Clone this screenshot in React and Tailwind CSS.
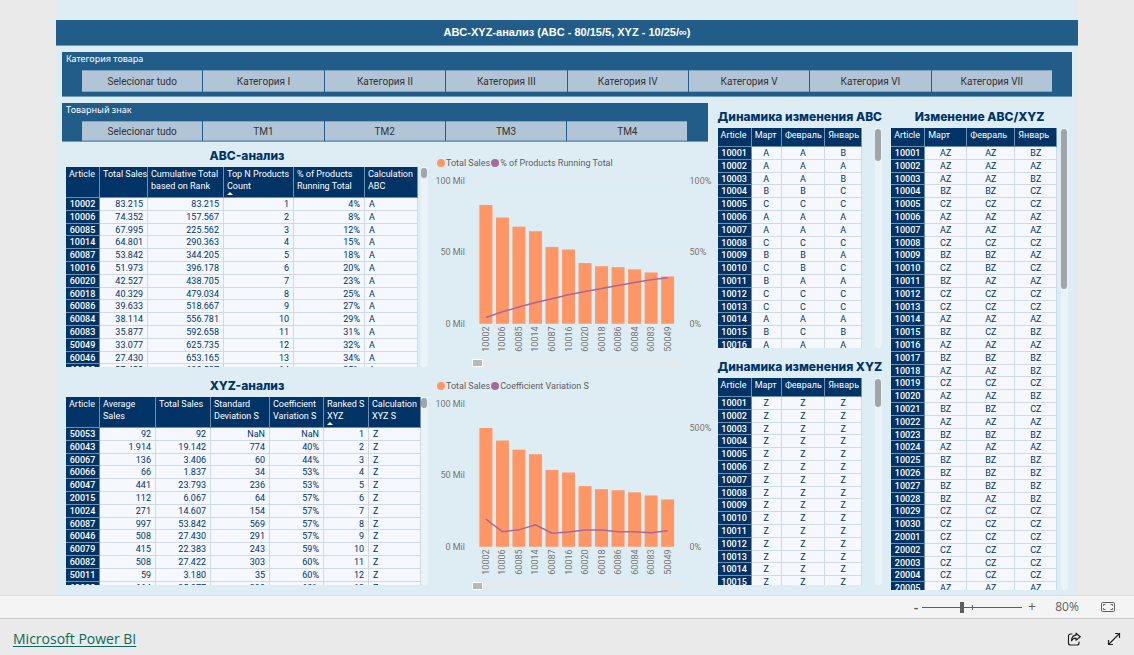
/**
 * App.jsx — ABC-XYZ analysis report
 *
 * Report canvas (slicers, two ranked tables with combo charts, three monthly
 * matrices) above the zoom bar and the embed footer.
 */

import { useState } from 'react';

// ─── Data ─────────────────────────────────────────────────────────────────────
const CATEGORIES = [
  'Selecionar tudo', 'Категория I', 'Категория II', 'Категория III',
  'Категория IV', 'Категория V', 'Категория VI', 'Категория VII',
];
const BRANDS = ['Selecionar tudo', 'ТМ1', 'ТМ2', 'ТМ3', 'ТМ4'];

const ABC_COLS = [
  { label: 'Article', width: 'w-[34px]' },
  { label: 'Total\u00a0Sales', width: 'w-[48px]', align: 'text-right' },
  { label: 'Cumulative Total based on Rank', width: 'w-[76px]', align: 'text-right' },
  { label: 'Top N Products Count', width: 'w-[70px]', align: 'text-right', sorted: true },
  { label: '% of Products Running Total', width: 'w-[71px]', align: 'text-right' },
  { label: 'Calculation ABC', width: 'w-[53px]', align: 'text-left' },
];
const ABC_ROWS = [
  ['10002', '83.215', '83.215', '1', '4%', 'A'],
  ['10006', '74.352', '157.567', '2', '8%', 'A'],
  ['60085', '67.995', '225.562', '3', '12%', 'A'],
  ['10014', '64.801', '290.363', '4', '15%', 'A'],
  ['60087', '53.842', '344.205', '5', '18%', 'A'],
  ['10016', '51.973', '396.178', '6', '20%', 'A'],
  ['60020', '42.527', '438.705', '7', '23%', 'A'],
  ['60018', '40.329', '479.034', '8', '25%', 'A'],
  ['60086', '39.633', '518.667', '9', '27%', 'A'],
  ['60084', '38.114', '556.781', '10', '29%', 'A'],
  ['60083', '35.877', '592.658', '11', '31%', 'A'],
  ['50049', '33.077', '625.735', '12', '32%', 'A'],
  ['60046', '27.430', '653.165', '13', '34%', 'A'],
  ['60082', '27.422', '680.587', '14', '35%', 'A'],
];

const XYZ_COLS = [
  { label: 'Article', width: 'w-[34px]' },
  { label: 'Average Sales', width: 'w-[56px]', align: 'text-right' },
  { label: 'Total\u00a0Sales', width: 'w-[55px]', align: 'text-right' },
  { label: 'Standard Deviation S', width: 'w-[59px]', align: 'text-right' },
  { label: 'Coefficient Variation S', width: 'w-[54px]', align: 'text-right' },
  { label: 'Ranked S XYZ', width: 'w-[45px]', align: 'text-right', sorted: true },
  { label: 'Calculation XYZ S', width: 'w-[52px]', align: 'text-left' },
];
const XYZ_ROWS = [
  ['50053', '92', '92', 'NaN', 'NaN', '1', 'Z'],
  ['60043', '1.914', '19.142', '774', '40%', '2', 'Z'],
  ['60067', '136', '3.406', '60', '44%', '3', 'Z'],
  ['60066', '66', '1.837', '34', '53%', '4', 'Z'],
  ['60047', '441', '23.793', '236', '53%', '5', 'Z'],
  ['20015', '112', '6.067', '64', '57%', '6', 'Z'],
  ['10024', '271', '14.607', '154', '57%', '7', 'Z'],
  ['60087', '997', '53.842', '569', '57%', '8', 'Z'],
  ['60046', '508', '27.430', '291', '57%', '9', 'Z'],
  ['60079', '415', '22.383', '243', '59%', '10', 'Z'],
  ['60082', '508', '27.422', '303', '60%', '11', 'Z'],
  ['50011', '59', '3.180', '35', '60%', '12', 'Z'],
  ['60083', '664', '35.877', '398', '60%', '13', 'Z'],
];

const MONTH_COLS = [
  { label: 'Article', width: 'w-[34px]' },
  { label: 'Март', width: 'w-[30px]', align: 'text-center' },
  { label: 'Февраль', width: 'w-[43px]', align: 'text-center' },
  { label: 'Январь', width: 'w-[37px]', align: 'text-center' },
];
const CHANGE_COLS = [
  { label: 'Article', width: 'w-[34px]' },
  { label: 'Март', width: 'w-[42px]', align: 'text-center' },
  { label: 'Февраль', width: 'w-[48px]', align: 'text-center' },
  { label: 'Январь', width: 'w-[42px]', align: 'text-center' },
];

const ABC_CHANGES =
  'AAB AAA AAB BBC CCC AAA AAA CCC BBA CBC BAA CCC CCC AAA BCB AAA'.split(' ');
const XYZ_CHANGES = Array(15).fill('ZZZ');
const BOTH_CHANGES = (
  'AAB AAA AAB BBC CCC AAA AAA CCC BBA CBC BAA CCC CCC AAA BCB AAA BBB AAB ' +
  'CCC AAB BBC AAA BBB AAA BBB BBB BBB BAB CCC CCC CCC CCC CCC CCC AAA'
).split(' ');

// 10001…10030, then 20001…
const articleAt = (i) => String(i < 30 ? 10001 + i : 20001 + i - 30);
const toRows = (codes, suffix = '') =>
  codes.map((code, i) => [articleAt(i), ...code.split('').map((c) => c + suffix)]);

const SALES = [83.2, 74.4, 68, 64.8, 53.8, 52, 42.5, 40.3, 39.6, 38.1, 35.9, 33.1];
const RUNNING = [4.4, 8.4, 11.7, 14.9, 17.5, 20.3, 22.6, 24.7, 26.8, 28.9, 30.8, 32.2];
const VARIATION = [116, 63, 71, 92, 57, 62, 70, 70, 63, 63, 59, 67];

// ─── Slicer ───────────────────────────────────────────────────────────────────
function Slicer({ label, items, buttonHeight, className }) {
  return (
    <section
      aria-label={label}
      className={`border-b border-[#6c9bbb] bg-[#225d89] px-1 pt-px ${className}`}
    >
      <h2 className="font-['Noto_Sans',sans-serif] text-[9px] leading-3 text-white">{label}</h2>
      <div className="mt-[5px] flex gap-px px-4">
        {items.map((item) => (
          <button
            key={item}
            type="button"
            className={`min-w-0 flex-1 border-y border-[#7fa3c0] bg-[#b2c5d6] text-[10px] text-[#333] ${buttonHeight}`}
          >
            {item}
          </button>
        ))}
      </div>
    </section>
  );
}

// ─── Table in a clipped viewport with its own scroll bar ──────────────────────
function ReportTable({ title, cols, rows, viewport, tableArea, headHeight, thumb }) {
  return (
    <section>
      <h2 className="mb-[3px] text-center font-['Inter',sans-serif] text-xs leading-4 font-extrabold whitespace-nowrap text-[#003366]">
        {title}
      </h2>
      <div className={`flex justify-between overflow-hidden ${viewport}`}>
        <div className={tableArea}>
          <table
            aria-label={title}
            className="w-full table-fixed border-separate border-spacing-0 text-[#003366]"
          >
            <colgroup>
              {cols.map((col) => (
                <col key={col.label} className={col.width} />
              ))}
            </colgroup>
            <thead>
              <tr className={headHeight}>
                {cols.map((col) => (
                  <th
                    key={col.label}
                    scope="col"
                    className="border-r border-b border-[#6f8fb0] bg-[#003366] p-0 pt-px pl-[3px] text-left align-top leading-3 font-normal text-white"
                  >
                    {col.label}
                    {col.sorted && (
                      <svg viewBox="0 0 6 3" className="block h-[3px] w-1.5" fill="#fff">
                        <path d="M0 3 3 0 6 3z" />
                      </svg>
                    )}
                  </th>
                ))}
              </tr>
            </thead>
            <tbody>
              {rows.map((row) => (
                // five rows take 64px
                <tr key={row[0]} className="h-[13px] align-top nth-[5n+3]:h-3">
                  <th
                    scope="row"
                    className="border-r border-b border-[#6f8fb0] bg-[#003366] p-0 pt-px text-center leading-[10px] font-medium text-white"
                  >
                    {row[0]}
                  </th>
                  {row.slice(1).map((cell, i) => (
                    <td
                      key={i}
                      className={`border-r border-b border-[#cfdae6] bg-[#f5f8fe] px-1 pt-px pb-0 leading-[10px] ${cols[i + 1].align}`}
                    >
                      {cell}
                    </td>
                  ))}
                </tr>
              ))}
            </tbody>
          </table>
        </div>
        <div className="w-[7px] rounded-b-sm bg-[#eaf4f8] pt-px">
          <div className={`w-1.5 rounded-full bg-[#a0a6a8] ${thumb}`} />
        </div>
      </div>
    </section>
  );
}

// ─── Combo chart: sales columns + one line ────────────────────────────────────
const BASE = 152;
const STEP = 1.43;
const centerX = (i) => 56 + i * 16.55;

function ComboChart({ lineName, values, lineMax, rightTicks, className }) {
  const points = values
    .map((v, i) => `${centerX(i)},${BASE - (v / lineMax) * 100 * STEP}`)
    .join(' ');

  return (
    <section aria-label={`Total Sales, ${lineName}`} className={className}>
      <div className="flex gap-px pl-[7px] leading-3 text-[#605e5c]">
        <span className="flex items-center gap-px">
          <i className="size-2 rounded-full bg-[#fe9666]" />
          Total Sales
        </span>
        <span className="flex items-center gap-px">
          <i className="size-2 rounded-full bg-[#a66999]" />
          {lineName}
        </span>
      </div>
      <svg viewBox="0 0 284 183" className="mt-[3px] block w-full" fontSize="9" fill="#777572">
        {[0, 50, 100].map((tick) => (
          <g key={tick}>
            <path d={`M43 ${BASE - tick * STEP}H251`} stroke="#e6e9ea" />
            <text x="35" y={BASE - tick * STEP + 3} textAnchor="end">{tick} Mil</text>
          </g>
        ))}
        {rightTicks.map((tick) => (
          <text key={tick} x="260" y={BASE - (tick / lineMax) * 100 * STEP + 3}>{tick}%</text>
        ))}
        {SALES.map((v, i) => (
          <rect
            key={i}
            x={centerX(i) - 6.5}
            y={BASE - v * STEP}
            width="13"
            height={v * STEP}
            fill="#fe9666"
          />
        ))}
        <polyline points={points} fill="none" stroke="#a66999" strokeWidth="1.5" />
        {SALES.map((_, i) => (
          <text key={i} transform={`translate(${centerX(i) + 3} 180) rotate(-90)`}>
            {ABC_ROWS[i][0]}
          </text>
        ))}
      </svg>
      <div className="mt-1 mr-[33px] ml-[42px] h-2 bg-[#e4ebee]">
        <div className="h-2 w-[11px] border border-white bg-[#b5babc]" />
      </div>
    </section>
  );
}

// ─── Zoom bar ─────────────────────────────────────────────────────────────────
function ZoomBar() {
  const [zoom, setZoom] = useState(80);

  return (
    <div className="flex h-[23px] items-center justify-end border-t border-[#dcdcdc] bg-[#f4f4f4] pr-[19px] font-['Open_Sans',sans-serif] text-[#605e5c]">
      <button
        type="button"
        aria-label="Zoom out"
        className="w-3 text-sm leading-4 font-semibold"
        onClick={() => setZoom((z) => Math.max(0, z - 10))}
      >
        -
      </button>
      <div className="relative flex">
        <input
          type="range"
          aria-label="Zoom"
          min="0"
          max="200"
          value={zoom}
          onChange={(e) => setZoom(Number(e.target.value))}
          className="h-3 w-[100px] appearance-none bg-[linear-gradient(#605e5c,#605e5c)] bg-size-[100%_1px] bg-center bg-no-repeat [&::-webkit-slider-thumb]:h-[11px] [&::-webkit-slider-thumb]:w-1 [&::-webkit-slider-thumb]:appearance-none [&::-webkit-slider-thumb]:bg-[#605e5c]"
        />
        <span className="pointer-events-none absolute top-1 left-1/2 h-[5px] w-px bg-[#605e5c]" />
      </div>
      <button
        type="button"
        aria-label="Zoom in"
        className="w-5 text-sm leading-4"
        onClick={() => setZoom((z) => Math.min(200, z + 10))}
      >
        +
      </button>
      <output className="w-[50px] text-center text-xs">{zoom}%</output>
      <button type="button" aria-label="Fit to page" className="ml-[9px]">
        <svg viewBox="0 0 14 10" className="h-2.5 w-3.5" fill="none" stroke="currentColor">
          <rect x=".5" y=".5" width="13" height="9" rx="1.2" />
          <path d="M2.5 4V2.5H4.5M9.5 2.5H11.5V4M11.5 6V7.5H9.5M4.5 7.5H2.5V6" strokeWidth=".9" />
        </svg>
      </button>
    </div>
  );
}

// ─── Footer ───────────────────────────────────────────────────────────────────
function Footer() {
  return (
    <footer className="flex flex-1 items-center border-t border-[#c8c8c8] bg-[#eaeaea] px-[13px] pt-3 pb-2">
      <a
        href="#"
        className="font-['Open_Sans',sans-serif] text-sm leading-4 text-[#0b6a5c] underline underline-offset-2"
      >
        Microsoft Power BI
      </a>
      <div className="ml-auto flex items-center gap-[26px] text-[#222]">
        <button type="button" aria-label="Share">
          <svg viewBox="0 0 14 14" className="size-3.5" fill="none" stroke="currentColor" strokeWidth="1.2" strokeLinejoin="round" strokeLinecap="round">
            <path d="M5 2H3.5A2 2 0 0 0 1.5 4V11A2 2 0 0 0 3.5 13H10A2 2 0 0 0 12 11V10" />
            <path d="M9 1.2 13.3 4.7 9 8.2V6.2C7 6.2 5.5 7 4.5 8.8 4.6 5.8 6.2 3.5 9 3.2Z" />
          </svg>
        </button>
        <button type="button" aria-label="Full screen">
          <svg viewBox="0 0 14 14" className="size-3.5" fill="none" stroke="currentColor" strokeWidth="1.2">
            <path d="M8 1.5H12.5V6M12.5 1.5 1.5 12.5M1.5 8V12.5H6" />
          </svg>
        </button>
      </div>
    </footer>
  );
}

// ─── Default export ───────────────────────────────────────────────────────────
export default function App() {
  return (
    <div className="flex min-h-screen flex-col bg-[#eaeaea] font-['Roboto',sans-serif] text-[9px]">
      <main className="mx-14 bg-[#deedf4] pt-5 pb-[5px]">
        <h1 className="border-b border-[#6c9bbb] bg-[#225d89] text-center font-['Liberation_Sans',sans-serif] text-[11px] leading-[25px] font-bold text-white">
          ABC-XYZ-анализ (ABC - 80/15/5, XYZ - 10/25/∞)
        </h1>

        <Slicer
          label="Категория товара"
          items={CATEGORIES}
          buttonHeight="h-[22px]"
          className="mx-1.5 mt-1.5 pb-1"
        />

        <div className="mt-1.5 grid grid-cols-[652fr_168fr_186fr] pr-2.5 pl-1.5">
          {/* Ranked tables and their charts */}
          <div>
            <Slicer label="Товарный знак" items={BRANDS} buttonHeight="h-5" className="mr-1.5" />
            <div className="mt-1.5 grid grid-cols-[368fr_284fr] gap-y-[11px]">
              <div className="pr-0.5 pl-1">
                <ReportTable
                  title="ABC-анализ"
                  cols={ABC_COLS}
                  rows={ABC_ROWS}
                  viewport="h-[200px]"
                  tableArea="w-[97%]"
                  headHeight="h-[31px]"
                  thumb="h-2.5"
                />
              </div>
              <ComboChart
                lineName="% of Products Running Total"
                values={RUNNING}
                lineMax={100}
                rightTicks={[0, 50, 100]}
                className="pt-[9px]"
              />
              <div className="pr-0.5 pl-1">
                <ReportTable
                  title="XYZ-анализ"
                  cols={XYZ_COLS}
                  rows={XYZ_ROWS}
                  viewport="h-[188px]"
                  tableArea="w-[98%]"
                  headHeight="h-[31px]"
                  thumb="h-2.5"
                />
              </div>
              <ComboChart
                lineName="Coefficient Variation S"
                values={VARIATION}
                lineMax={600}
                rightTicks={[0, 500]}
                className="pt-0.5"
              />
            </div>
          </div>

          {/* Month-by-month matrices */}
          <div className="flex flex-col gap-[11px] pt-1.5 pl-1">
            <ReportTable
              title="Динамика изменения ABC"
              cols={MONTH_COLS}
              rows={toRows(ABC_CHANGES)}
              viewport="h-[220px]"
              tableArea="w-[88%]"
              headHeight="h-[19px]"
              thumb="h-8"
            />
            <ReportTable
              title="Динамика изменения XYZ"
              cols={MONTH_COLS}
              rows={toRows(XYZ_CHANGES)}
              viewport="h-[207px]"
              tableArea="w-[88%]"
              headHeight="h-[19px]"
              thumb="h-7"
            />
          </div>
          <div className="pt-1.5 pl-[9px]">
            <ReportTable
              title="Изменение ABC/XYZ"
              cols={CHANGE_COLS}
              rows={toRows(BOTH_CHANGES, 'Z')}
              viewport="h-[462px]"
              tableArea="w-[94%]"
              headHeight="h-[19px]"
              thumb="h-40"
            />
          </div>
        </div>
      </main>
      <ZoomBar />
      <Footer />
    </div>
  );
}
